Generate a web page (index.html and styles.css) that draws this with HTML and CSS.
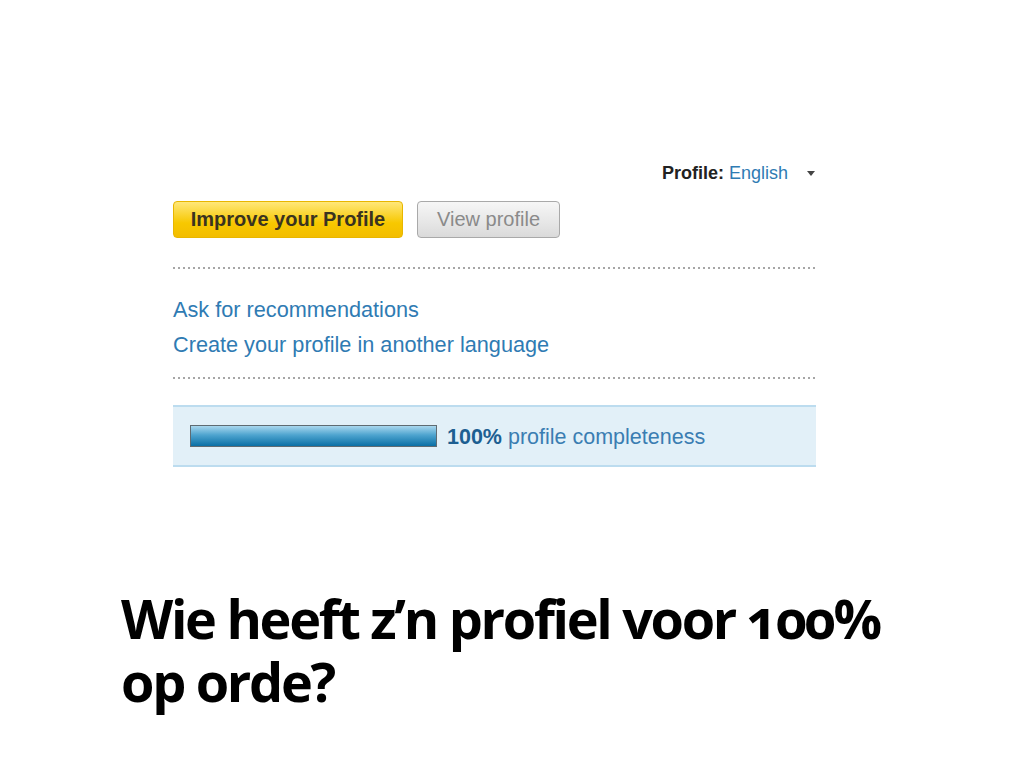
FILE: index.html
```html
<!DOCTYPE html>
<html lang="en">
<head>
    <meta charset="UTF-8">
    <meta name="viewport" content="width=device-width, initial-scale=1.0">
    <title>Wie heeft z’n profiel voor 100% op orde?</title>
    <link rel="stylesheet" href="styles.css">
</head>
<body>
    <div class="slide">
        <div class="profile-box">
            <div class="profile-lang">
                <span class="lang-label"><b>Profile:</b> <a href="#">English</a></span>
                <span class="lang-arrow"></span>
            </div>

            <div class="profile-actions">
                <button class="btn btn-primary">Improve your Profile</button>
                <button class="btn btn-secondary">View profile</button>
            </div>

            <div class="dotted"></div>

            <ul class="profile-links">
                <li><a href="#">Ask for recommendations</a></li>
                <li><a href="#">Create your profile in another language</a></li>
            </ul>

            <div class="dotted"></div>

            <div class="completeness">
                <div class="meter"><div class="meter-fill" style="width: 100%"></div></div>
                <span class="meter-text"><strong>100%</strong> profile completeness</span>
            </div>
        </div>

        <h1 class="slide-title">Wie heeft z’n profiel voor 100% op orde?</h1>
    </div>
</body>
</html>
```

FILE: styles.css
```css
body {
    margin: 0;
    padding: 0;
    background-color: #fff;
    font-family: "Liberation Sans", Arial, sans-serif;
}

.slide {
    width: 1024px;
    height: 768px;
    overflow: hidden;
}

.profile-box {
    width: 643px;
    margin-left: 173px;
    padding-top: 161px;
}

.profile-lang {
    display: flex;
    justify-content: flex-end;
    align-items: center;
    height: 24px;
    gap: 19px;
    font-size: 18px;
    color: #222;
}

.profile-lang a {
    color: #2f7bb3;
    text-decoration: none;
}

.lang-arrow {
    width: 0;
    height: 0;
    border-left: 4px solid transparent;
    border-right: 4px solid transparent;
    border-top: 5px solid #444;
    margin-right: 1px;
}

.profile-actions {
    display: flex;
    gap: 14px;
    margin-top: 16px;
}

.btn {
    height: 37px;
    padding: 0;
    font-family: "Liberation Sans", Arial, sans-serif;
    font-size: 20px;
    white-space: nowrap;
    border-radius: 4px;
    cursor: pointer;
}

.btn-primary {
    width: 230px;
    font-weight: bold;
    color: #3a3320;
    background: linear-gradient(#ffe77a, #f7c800 60%, #f3bd00);
    border: 1px solid #e8b600;
}

.btn-secondary {
    width: 143px;
    color: #8a8a8a;
    background: linear-gradient(#f6f6f6, #e6e6e6 60%, #dadada);
    border: 1px solid #a9a9a9;
}

.dotted {
    height: 2px;
    margin-top: 29px;
    background-image: linear-gradient(to right, #a6a6a6 2px, transparent 2px);
    background-size: 5px 2px;
}

.profile-links {
    list-style: none;
    margin: 23px 0 15px;
    padding: 0;
    font-size: 21.7px;
    line-height: 35px;
}

.profile-links a {
    color: #2f7bb3;
    text-decoration: none;
}

.profile-links + .dotted {
    margin-top: 0;
}

.completeness {
    display: flex;
    align-items: center;
    gap: 10px;
    height: 58px;
    margin-top: 26px;
    padding-left: 17px;
    background-color: #e2f0f8;
    border-top: 2px solid #bcdcef;
    border-bottom: 2px solid #bcdcef;
}

.meter {
    width: 245px;
    height: 20px;
    border: 1px solid #5f6b72;
    background-color: #dcecf5;
}

.meter-fill {
    height: 100%;
    background: linear-gradient(#a9d7ee, #4ea4cf 45%, #0a6fa5);
}

.meter-text {
    font-size: 21.5px;
    color: #3a7db2;
    padding-top: 3px;
}

.meter-text strong {
    color: #1d5f92;
}

.slide-title {
    margin: 120px 0 0 121px;
    width: 800px;
    font-family: "Open Sans", "Noto Sans", sans-serif;
    font-weight: 700;
    font-size: 54px;
    line-height: 63px;
    letter-spacing: -2.3px;
    font-variant-numeric: oldstyle-nums;
    color: #000;
}
```
